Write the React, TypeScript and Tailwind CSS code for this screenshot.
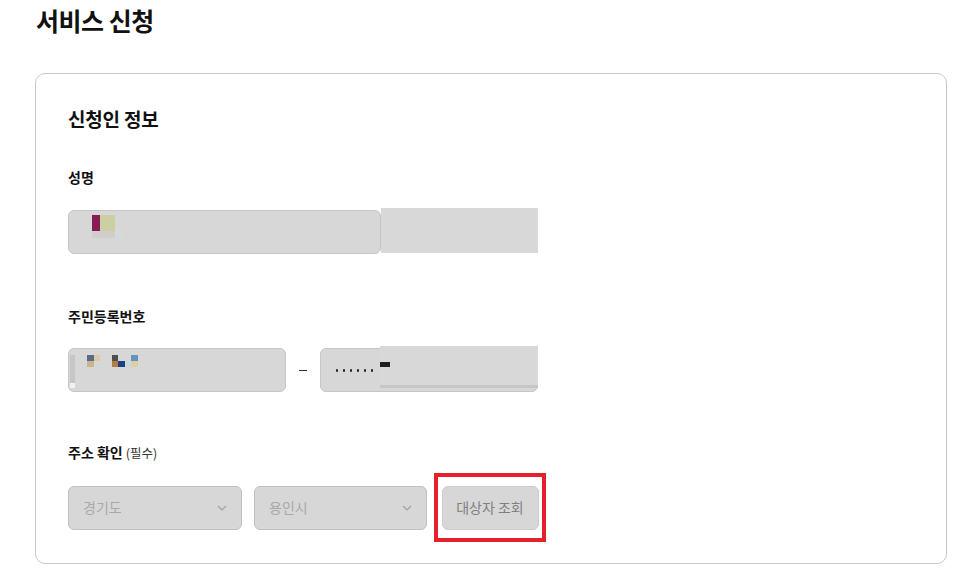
import React from "react";

const B = ({ c, w, h = 6 }: { c: string; w: number; h?: number }) => (
  <div className="shrink-0" style={{ width: w, height: h, background: c }} />
);

const Chevron = () => (
  <svg width="10" height="6" viewBox="0 0 10 6" className="shrink-0">
    <path d="M1 1l4 4 4-4" fill="none" stroke="#a0a0a0" strokeWidth="1.1" />
  </svg>
);

const T = "transparent";

export default function App() {
  return (
    <div
      className="w-[962px] h-[577px] bg-white overflow-hidden text-[#222]"
      style={{ fontFamily: '"Noto Sans CJK KR", "Noto Sans", sans-serif' }}
    >
      <h1 className="pl-[36px] pt-[2px] text-[25px] leading-[36px] font-bold tracking-[-0.5px] text-[#111]">
        서비스 신청
      </h1>
      <div className="ml-[35px] mt-[35px] w-[912px] h-[491px] border border-[#c8c8c8] rounded-[10px] pl-[32px] pt-[30px]">
        <h2 className="text-[19px] leading-[30px] font-bold text-[#111] tracking-[-0.2px]">신청인 정보</h2>

        <div className="mt-[33px] text-[14px] leading-[20px] font-bold text-[#111]">성명</div>
        <div className="mt-[21px] flex items-start w-[470px]">
          <div className="mt-[2px] w-[313px] h-[44px] bg-[#d7d7d7] border border-[#c6c6c6] rounded-[6px] pl-[23px] pt-[4px] flex flex-col">
            <div className="flex">
              <B c="#861d55" w={8} h={16} />
              <B c="#cccfa2" w={15} h={16} />
            </div>
            <div className="flex">
              <B c="#d2cccc" w={23} h={7} />
              <B c="#d4dada" w={8} h={7} />
            </div>
          </div>
          <div className="w-[157px] h-[45px] bg-[#d8d8d8]" />
        </div>

        <div className="mt-[52px] text-[14px] leading-[20px] font-bold text-[#111]">주민등록번호</div>
        <div className="mt-[22px] flex items-center w-[470px] h-[44px]">
          <div className="w-[218px] h-[44px] bg-[#d7d7d7] border border-[#c6c6c6] rounded-[6px] flex items-start pt-[6px] pl-[1px]">
            <div className="flex flex-col">
              <B c="#c6c6c6" w={5} h={28} />
              <B c="#f2f2f2" w={5} h={5} />
            </div>
            <div className="ml-[12px] flex flex-col">
              <div className="flex">
                <B c="#5a6b8a" w={7} />
                <B c="#dccaa4" w={6} />
                <B c={T} w={12} />
                <B c="#4f4f4f" w={6} />
                <B c={T} w={13} />
                <B c="#6392bf" w={7} />
              </div>
              <div className="flex">
                <B c="#cdb48f" w={7} />
                <B c={T} w={18} />
                <B c="#b07c48" w={6} />
                <B c="#1e3f80" w={7} />
                <B c="#c8dadd" w={6} />
                <B c="#dccfa4" w={7} />
              </div>
            </div>
          </div>
          <div className="w-[34px] flex justify-center">
            <div className="w-[8px] h-[1px] bg-[#333] mt-[1px]" />
          </div>
          <div className="w-[218px] h-[44px] bg-[#d7d7d7] border border-[#c6c6c6] rounded-[6px] flex items-start">
            <div className="w-[59px] self-stretch flex items-center pl-[15px] gap-[5px] pt-[1px]">
              {[0, 1, 2, 3, 4, 5].map((i) => (
                <div key={i} className="w-[2px] h-[3px] rounded-full bg-[#222]" />
              ))}
            </div>
            <div className="-mt-[3px] -mr-[1px] flex-1 flex flex-col">
              <div className="h-[39px] bg-[#d8d8d8] pt-[16px]">
                <div className="w-[10px] h-[5px] bg-[#1f1f1f]" />
              </div>
              <div className="h-[3px] bg-[#c6c6c6]" />
            </div>
          </div>
        </div>

        <div className="mt-[50px] text-[14px] leading-[20px] font-bold text-[#111] flex items-baseline">
          주소 확인
          <span className="ml-[3px] text-[12.5px] font-normal text-[#333]">(필수)</span>
        </div>
        <div className="mt-[10px] flex items-center">
          <div className="w-[174px] h-[44px] bg-[#d7d7d7] border border-[#c0c0c0] rounded-[6px] flex items-center justify-between pl-[14px] pr-[14px] text-[14px] text-[#a9a9a9]">
            <span>경기도</span>
            <Chevron />
          </div>
          <div className="ml-[12px] w-[173px] h-[44px] bg-[#d7d7d7] border border-[#c0c0c0] rounded-[6px] flex items-center justify-between pl-[14px] pr-[14px] text-[14px] text-[#a9a9a9]">
            <span>용인시</span>
            <Chevron />
          </div>
          <div className="ml-[7px] w-[112px] h-[69px] border-[4px] border-[#e5202a] flex items-center justify-center">
            <div className="w-[97px] h-[44px] bg-[#d7d7d7] border border-[#cbcbcb] rounded-[6px] flex items-center justify-center text-[14px] text-[#7f7f7f]">
              대상자 조회
            </div>
          </div>
        </div>
      </div>
    </div>
  );
}
